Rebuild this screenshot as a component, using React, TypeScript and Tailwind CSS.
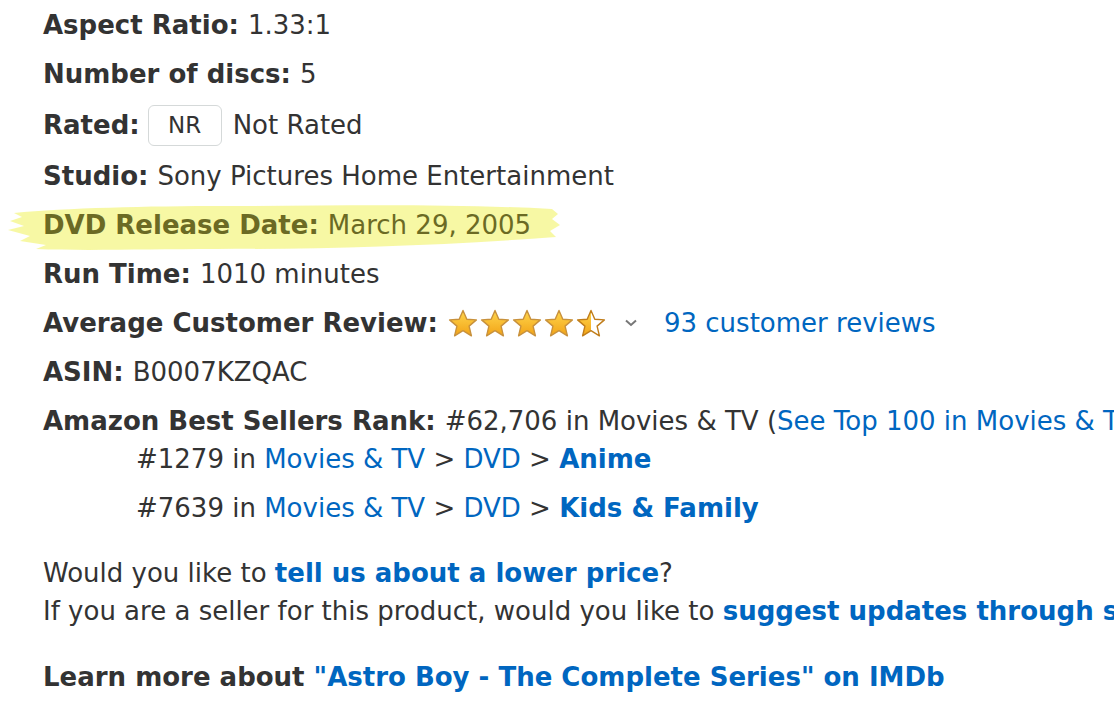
import React from 'react';

const font = { fontFamily: '"DejaVu Sans", Verdana, sans-serif' };

const starPts = '16,1.5 19.8,10.3 29.4,10.9 22.1,17.1 24.4,26.8 16,21.6 7.6,26.8 9.9,17.1 2.6,10.9 12.2,10.3';

function Star({ fill }: { fill: 'full' | 'half' }) {
  const id = fill === 'full' ? 'gFull' : 'gHalf';
  return (
    <svg width="32" height="29" viewBox="0 0 32 29" className="block">
      <defs>
        <linearGradient id="starGrad" x1="0" y1="0" x2="0" y2="1">
          <stop offset="0" stopColor="#ffd64d" />
          <stop offset="1" stopColor="#f2a316" />
        </linearGradient>
        <clipPath id={id}>
          <rect x="0" y="0" width={fill === 'full' ? 32 : 16} height="29" />
        </clipPath>
      </defs>
      <polygon points={starPts} fill="#fff" />
      <polygon points={starPts} fill="url(#starGrad)" clipPath={`url(#${id})`} />
      <polygon
        points={starPts}
        fill="none"
        stroke={fill === 'full' ? '#c8913c' : '#c07d1a'}
        strokeWidth="1.4"
        strokeLinejoin="round"
      />
    </svg>
  );
}

function Row({ label, children }: { label: string; children?: React.ReactNode }) {
  return (
    <div className="flex items-center h-[38px] mb-[11px]">
      <span className="font-bold">{label}</span>
      <span className="ml-[9px] flex items-center">{children}</span>
    </div>
  );
}

export default function App() {
  return (
    <div className="w-[1114px] h-[704px] overflow-hidden bg-white text-[#333] text-[26px] whitespace-nowrap" style={font}>
      <div className="pl-[43px] pt-[6px]">
        <Row label="Aspect Ratio:">1.33:1</Row>
        <Row label="Number of discs:">5</Row>
        <div className="flex items-center h-[42px] mb-[11px]">
          <span className="font-bold">Rated:</span>
          <span className="ml-[8px] w-[74px] h-[41px] border border-[#d5d9d9] rounded-[6px] flex items-center justify-center text-[23px]">NR</span>
          <span className="ml-[11px]">Not Rated</span>
        </div>
        <Row label="Studio:">Sony Pictures Home Entertainment</Row>

        <div className="relative flex items-center h-[38px] mb-[11px] text-[#6b6a24]">
          <svg className="absolute left-[-37px] top-[-5px]" width="560" height="54" viewBox="0 0 560 54">
            <path
              d="M8 12 C60 7 140 5 220 5 C320 5 430 2 546 8 L552 13 L546 18 L554 24 L544 30 L550 36 C430 45 320 48 210 48 C140 48 80 50 30 48 L40 44 L14 40 L24 35 L2 29 L18 25 L4 20 L16 16 Z"
              fill="#f6f79a"
              opacity="0.9"
            />
          </svg>
          <span className="relative font-bold">DVD Release Date:</span>
          <span className="relative ml-[9px]">March 29, 2005</span>
        </div>

        <Row label="Run Time:">1010 minutes</Row>
        <div className="flex items-center h-[38px] mb-[11px]">
          <span className="font-bold">Average Customer Review:</span>
          <span className="ml-[9px] flex items-center">
            <Star fill="full" />
            <Star fill="full" />
            <Star fill="full" />
            <Star fill="full" />
            <Star fill="half" />
          </span>
          <svg className="ml-[17px]" width="14" height="10" viewBox="0 0 14 10">
            <path d="M2 2.5 L7 7 L12 2.5" fill="none" stroke="#777" strokeWidth="2" />
          </svg>
          <span className="ml-[26px] text-[#0066c0]">93 customer reviews</span>
        </div>
        <Row label="ASIN:">B0007KZQAC</Row>
        <div className="flex items-center h-[38px]">
          <span className="font-bold">Amazon Best Sellers Rank:</span>
          <span className="ml-[9px]">
            #62,706 in Movies &amp; TV (<span className="text-[#0066c0]">See Top 100 in Movies &amp; TV</span>)
          </span>
        </div>
        <div className="pl-[93px]">
          <div className="flex items-center h-[38px] mb-[11px]">
            #1279 in&nbsp;<span className="text-[#0066c0]">Movies &amp; TV</span>&nbsp;&gt;&nbsp;
            <span className="text-[#0066c0]">DVD</span>&nbsp;&gt;&nbsp;
            <span className="text-[#0066c0] font-bold">Anime</span>
          </div>
          <div className="flex items-center h-[38px]">
            #7639 in&nbsp;<span className="text-[#0066c0]">Movies &amp; TV</span>&nbsp;&gt;&nbsp;
            <span className="text-[#0066c0]">DVD</span>&nbsp;&gt;&nbsp;
            <span className="text-[#0066c0] font-bold">Kids &amp; Family</span>
          </div>
        </div>

        <div className="mt-[27px] leading-[38px]">
          <div>
            Would you like to <span className="text-[#0066c0] font-bold">tell us about a lower price</span>?
          </div>
          <div>
            If you are a seller for this product, would you like to{' '}
            <span className="text-[#0066c0] font-bold">suggest updates through seller support</span>?
          </div>
        </div>

        <div className="mt-[28px] leading-[38px]">
          <span className="font-bold">Learn more about </span>
          <span className="text-[#0066c0] font-bold">"Astro Boy - The Complete Series" on IMDb</span>
        </div>
      </div>
    </div>
  );
}
